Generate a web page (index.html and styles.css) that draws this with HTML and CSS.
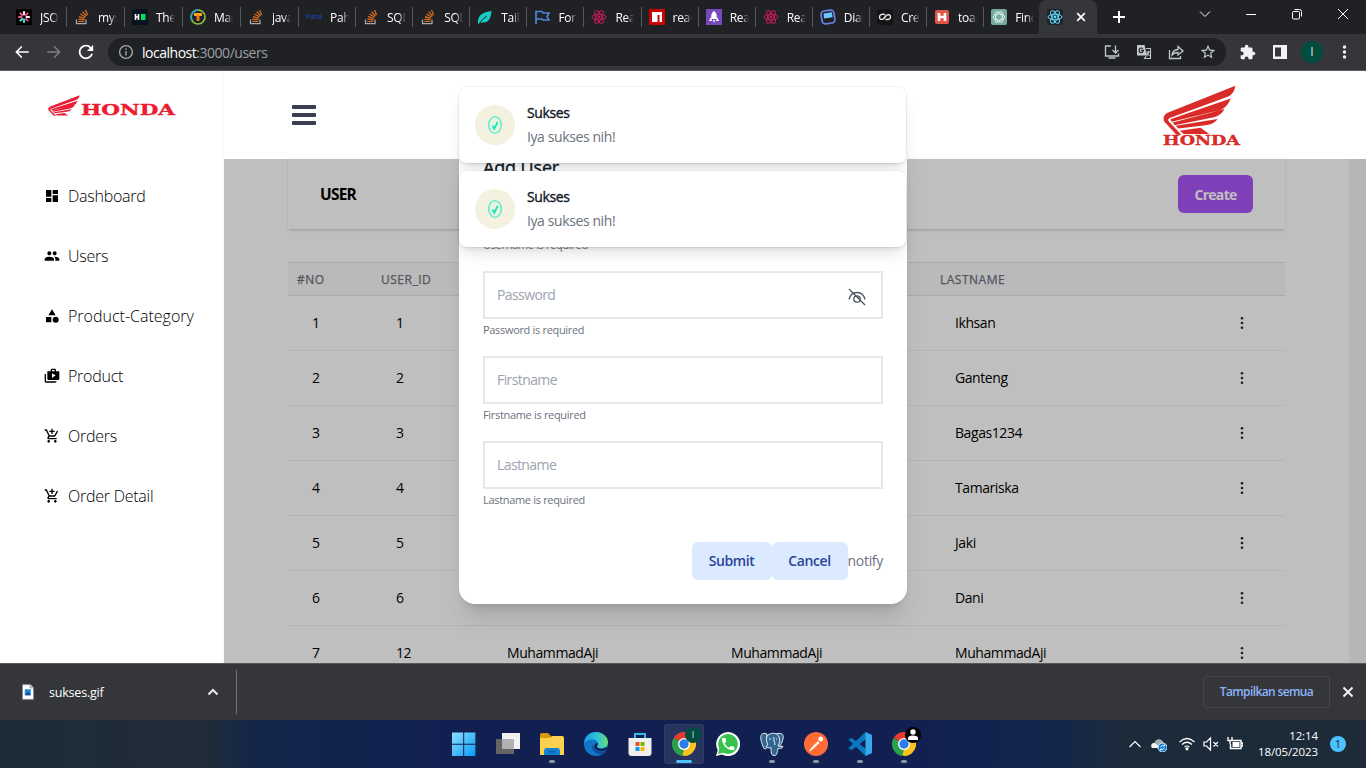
FILE: index.html
```html
<!DOCTYPE html>
<html lang="id">
<head>
<meta charset="utf-8">
<title>Users</title>
<link rel="stylesheet" href="styles.css">
</head>
<body>
<svg class="defs" aria-hidden="true">
  <symbol id="so" viewBox="0 0 16 16"><path d="M2.500 10.500v4.200h9.500v-4.200" fill="none" stroke="#a5a9ad" stroke-width="1.300"/><path d="M4.200 12.500h6M4.400 10.200l6 .6M5 7.600l5.800 1.700M6.400 5l5.200 3M8.600 2.600l4 4.400M11.500 1l2.200 5" stroke="#e2701c" stroke-width="1.200"/></symbol>
  <symbol id="atom" viewBox="0 0 16 16"><g fill="none" stroke="currentColor" stroke-width="1"><ellipse cx="8" cy="8" rx="7" ry="2.800"/><ellipse cx="8" cy="8" rx="7" ry="2.800" transform="rotate(60 8 8)"/><ellipse cx="8" cy="8" rx="7" ry="2.800" transform="rotate(120 8 8)"/></g><circle cx="8" cy="8" r="1.400" fill="currentColor"/></symbol>
  <symbol id="wing" viewBox="788 38 218 152" preserveAspectRatio="none"><path fill="currentColor" d="M1004 40L800 123Q786 132 791 148L828 189H843L806 150Q800 143 808 138L983 73Q1002 62 1004 40ZM990 79L810 142L814 150L960 114Q982 104 990 79ZM972 111L817 152L823 160L940 136Q962 130 972 111ZM951 141L826 162L834 170L915 160Q941 158 951 141ZM838 177L900 168L926 187H850Z"/></symbol>
  <symbol id="cart" viewBox="0 0 24 24"><path d="M11 9h2V6h3V4h-3V1h-2v3H8v2h3v3zm-4 9c-1.100 0-1.990.9-1.990 2S5.900 22 7 22s2-.9 2-2-.9-2-2-2zm10 0c-1.100 0-1.990.9-1.990 2s.89 2 1.990 2 2-.9 2-2-.9-2-2-2zm-9.830-3.250l.03-.12.9-1.630h7.450c.75 0 1.410-.41 1.750-1.030l3.860-7.010L19.420 4h-.01l-1.100 2-2.760 5H8.530l-.13-.27L6.160 6l-.95-2-.94-2H1v2h2l3.600 7.590-1.350 2.450c-.16.28-.25.61-.25.96 0 1.100.9 2 2 2h12v-2H7.420c-.13 0-.25-.11-.25-.25z"/></symbol>
  <symbol id="dots" viewBox="0 0 16 16"><circle cx="8" cy="3.200" r="1.300"/><circle cx="8" cy="8" r="1.300"/><circle cx="8" cy="12.800" r="1.300"/></symbol>
  <symbol id="chrome" viewBox="0 0 24 24"><path fill="#e33b2e" d="M12 12L1.600 6A12 12 0 0 1 22.400 6z"/><path fill="#fcc31e" d="M12 12L22.400 6A12 12 0 0 1 12 24z"/><path fill="#2ca14c" d="M12 12v12A12 12 0 0 1 1.600 6z"/><path fill="#e33b2e" d="M12 6h10.400L17.500 14z"/><path fill="#fcc31e" d="M17.200 9L22.400 6 12 24 8 19z"/><path fill="#2ca14c" d="M1.600 6l5.200 9 5.200 3-2 5.800z"/><circle cx="12" cy="12" r="6" fill="#fff"/><circle cx="12" cy="12" r="4.700" fill="#2b7de9"/></symbol>
  <symbol id="check" viewBox="0 0 40 40"><circle cx="20" cy="20" r="20" fill="#f5f1e0"/><ellipse cx="20" cy="20" rx="6.300" ry="8.300" fill="#e9f3e2" stroke="#4debc8" stroke-width="1.300"/><path d="M17.500 20.500l1.800 3.200 3.300-6.700" fill="none" stroke="#1de5ba" stroke-width="1.800"/></symbol>
</svg>

<div class="tabs">
  <div class="tab"><svg viewBox="0 0 16 16"><path fill="#000" d="M0 0h16v16H0z"/><g stroke-width="2.200" stroke-linecap="round"><path d="M8 3v2.500M13 8h-2.500" stroke="#f2f2f2"/><path d="M11.500 4.500L10 6M11.500 11.500L10 10" stroke="#ec3d75"/><path d="M8 13v-2.500M4.500 11.500L6 10" stroke="#47d6d2"/><path d="M3 8h2.500M4.500 4.500L6 6" stroke="#ee5386"/></g></svg><span>JSON</span></div>
  <div class="tab"><svg><use href="#so"/></svg><span>mysql</span></div>
  <div class="tab"><svg viewBox="0 0 16 16"><path fill="#07131f" d="M0 0h16v16H0z"/><path d="M3.500 5v6M6.500 5v6M3.500 8h3" stroke="#fff" stroke-width="1.600"/><path d="M9 5h4.500v6H9z" fill="#05e05a"/></svg><span>The</span></div>
  <div class="tab"><svg viewBox="0 0 16 16"><circle cx="8" cy="8" r="7" fill="none" stroke="#8fc63d" stroke-width="1.600"/><path d="M8 1a7 7 0 0 0-6 10" fill="none" stroke="#2a9ee0" stroke-width="1.600"/><path d="M4 5.500h8M8 5v7" stroke="#f9a51a" stroke-width="2.800"/><path d="M8 6v6" stroke="#e6432e"/></svg><span>Mar</span></div>
  <div class="tab"><svg><use href="#so"/></svg><span>java</span></div>
  <div class="tab"><svg viewBox="0 0 16 16"><text x="0" y="10" textLength="16" lengthAdjust="spacingAndGlyphs" class="paha">Paha</text></svg><span>Paha</span></div>
  <div class="tab"><svg><use href="#so"/></svg><span>SQL</span></div>
  <div class="tab"><svg><use href="#so"/></svg><span>SQL</span></div>
  <div class="tab"><svg viewBox="0 0 16 16"><path d="M1 15C0 6 6 3 14.500 2 14 9 12 14 5 13.500z" fill="#15cbc4"/><path d="M2 15Q5 10 10 7" stroke="#202124" fill="none"/></svg><span>Tailwind</span></div>
  <div class="tab"><svg viewBox="0 0 16 16"><path d="M2 15V2.500h6l1 1.500h6l-2 3.500 2 3.500H9L8 10H2" fill="none" stroke="#4a87d6" stroke-width="1.700"/></svg><span>Form</span></div>
  <div class="tab pink"><svg><use href="#atom"/></svg><span>React</span></div>
  <div class="tab"><svg viewBox="0 0 16 16"><path d="M0 0h16v16H0z" fill="#cb0303"/><path d="M3 3h10v10h-2.500V6H8.500v7H3z" fill="#fff"/></svg><span>react</span></div>
  <div class="tab"><svg viewBox="0 0 16 16"><path d="M0 0h16v16H0z" fill="#764abc"/><path d="M8 2c3 2 3 5 2.500 8h-5C5 7 5 4 8 2zM5 8l-2 4h3zM11 8l2 4h-3zM7 11h2l-1 3z" fill="#fff"/></svg><span>React</span></div>
  <div class="tab pink"><svg><use href="#atom"/></svg><span>React</span></div>
  <div class="tab"><svg viewBox="0 0 16 16"><rect x="1.500" y="1.500" width="13" height="13" rx="3.500" fill="#202124" stroke="#6983e8" stroke-width="1.700" transform="rotate(-8 8 8)"/><path d="M3.500 4.500l8.500-1.200 .6 5-8.500 1.200z" fill="#6bc7ff"/></svg><span>Dialog</span></div>
  <div class="tab"><svg viewBox="0 0 16 16"><rect width="16" height="16" rx="3.500" fill="#131416"/><path d="M8 5.500Q2.500 4.500 2.500 8t4 1.800L9.500 6.200q4-1.500 4 1.800T8.500 10.300" fill="none" stroke="#e8e8e8" stroke-width="1.400"/></svg><span>Create</span></div>
  <div class="tab"><svg viewBox="0 0 16 16"><rect x="1" y="1" width="14" height="14" rx="2" fill="#e2564a"/><path d="M5 4v8M11 4v8M5 8h6" stroke="#fff" stroke-width="2.600"/></svg><span>toast</span></div>
  <div class="tab"><svg viewBox="0 0 16 16"><rect width="16" height="16" rx="2" fill="#74aa9c"/><g fill="none" stroke="#e8f3f0" stroke-width=".9"><ellipse cx="8" cy="8" rx="5.800" ry="3.200"/><ellipse cx="8" cy="8" rx="5.800" ry="3.200" transform="rotate(60 8 8)"/><ellipse cx="8" cy="8" rx="5.800" ry="3.200" transform="rotate(120 8 8)"/></g></svg><span>Find</span></div>
  <div class="tab active"><svg class="react" viewBox="0 0 16 16"><use href="#atom"/></svg><svg class="x" viewBox="0 0 10 10"><path d="M1.200 1.200l7.600 7.600M8.800 1.200L1.200 8.800" stroke="#fff" stroke-width="1.700"/></svg></div>
  <svg class="plus" viewBox="0 0 14 14"><path d="M7 1v12M1 7h12" stroke="#fff" stroke-width="2"/></svg>
  <div class="winctl">
    <svg viewBox="0 0 12 12"><path d="M1 3.500l5 5 5-5"/></svg><svg viewBox="0 0 12 12"><path d="M1 6.500h10"/></svg><svg viewBox="0 0 12 12"><rect x="1.500" y="3.500" width="7" height="7.500" rx="1"/><path d="M3.500 1.500h5q2 0 2 2v5"/></svg><svg viewBox="0 0 12 12"><path d="M1 1l10 10M11 1L1 11"/></svg>
  </div>
</div>

<div class="toolbar">
  <div class="nav">
    <svg viewBox="0 0 24 24" fill="#fff"><path d="M21 11H6.800l5.700-5.600L11 4l-8 8 8 8 1.500-1.400L6.800 13H21z"/></svg>
    <svg viewBox="0 0 24 24" fill="#7d7f82"><path d="M3 11h14.200l-5.700-5.600L13 4l8 8-8 8-1.500-1.400 5.700-5.600H3z"/></svg>
    <svg viewBox="2 2 20 20" fill="#fff"><path d="M17.650 6.350C16.200 4.900 14.210 4 12 4c-4.420 0-7.990 3.580-7.990 8s3.570 8 7.990 8c3.730 0 6.840-2.550 7.730-6h-2.080c-.82 2.330-3.040 4-5.650 4-3.310 0-6-2.690-6-6s2.690-6 6-6c1.660 0 3.140.69 4.220 1.780L13 11h7V4l-2.350 2.350z"/></svg>
  </div>
  <div class="address">
    <svg viewBox="0 0 16 16" fill="none" stroke="#a3a6aa" stroke-width="1.400"><circle cx="8" cy="8" r="6.400"/><path d="M8 7v4.500M8 4.200v1.600"/></svg>
    <span class="url">localhost<i>:3000/users</i></span>
    <div class="aicons">
      <svg viewBox="0 0 16 16"><path d="M7 2H1.500v10h13V9.500M4.500 14h7M11.500 1.500v7M8.500 6l3 3 3-3"/></svg>
      <svg viewBox="0 0 16 16"><path class="solid" fill-rule="evenodd" d="M1 1h7.500l2.500 10.500H1zM8 5.800H5v1.100h1.700Q6.300 8 5.200 8 3.600 8 3.600 6.300T5.200 4.600q.7 0 1.200.5l.9-.9Q6.400 3.400 5.200 3.400 2.500 3.400 2.500 6.300T5.200 9.200 8 5.800z"/><path d="M10 4.500h4.500v10h-6l2-3M10.500 8H14M12.500 7v1q-.5 2-1.500 3M11 9l2.500 3" stroke-width="1.100"/></svg>
      <svg viewBox="0 0 16 16"><path d="M1.500 6v8.500h11V12M4 11q.5-5 6-5.500V2.500L15 7l-5 4V8.500Q6 8.500 4 11z"/></svg>
      <svg viewBox="1 1 22 22"><path class="solid" d="M22 9.240l-7.190-.62L12 2 9.190 8.630 2 9.240l5.460 4.730L5.820 21 12 17.270 18.180 21l-1.630-7.030L22 9.240zM12 15.400l-3.760 2.270 1-4.280-3.320-2.880 4.380-.38L12 6.100l1.710 4.040 4.380.38-3.320 2.880 1 4.280L12 15.400z"/></svg>
    </div>
  </div>
  <div class="ext">
    <svg viewBox="1 0 23 23" fill="#f1f3f4"><path d="M20.500 11H19V7c0-1.100-.9-2-2-2h-4V3.500C13 2.120 11.880 1 10.500 1S8 2.120 8 3.500V5H4c-1.100 0-1.990.9-1.990 2v3.800H3.500c1.490 0 2.700 1.210 2.700 2.700s-1.210 2.700-2.700 2.700H2V20c0 1.100.9 2 2 2h3.800v-1.500c0-1.490 1.210-2.700 2.700-2.700 1.490 0 2.700 1.210 2.700 2.700V22H17c1.100 0 2-.9 2-2v-4h1.500c1.380 0 2.500-1.120 2.500-2.500S21.880 11 20.500 11z"/></svg>
    <svg viewBox="0 0 16 16"><path d="M1 1h14v14H1zM3 3.500v9h6v-9z" fill="#f1f3f4" fill-rule="evenodd"/></svg>
    <b class="me">I</b>
    <svg viewBox="0 0 16 16" fill="#f1f3f4"><circle cx="8.500" cy="3" r="1.700"/><circle cx="8.500" cy="8" r="1.700"/><circle cx="8.500" cy="13" r="1.700"/></svg>
  </div>
</div>

<div class="page">
  <aside class="side">
    <div class="brand"><svg class="wing"><use href="#wing"/></svg><svg class="name" viewBox="0 0 95 12"><text x="0" y="11" textLength="94" lengthAdjust="spacingAndGlyphs">HONDA</text></svg></div>
    <nav class="menu">
      <a><svg viewBox="0 0 24 24"><path d="M3 13h8V3H3v10zm0 8h8v-6H3v6zm10 0h8V11h-8v10zm0-18v6h8V3h-8z"/></svg>Dashboard</a>
      <a><svg viewBox="0 0 24 24"><path d="M16 11c1.660 0 2.990-1.340 2.990-3S17.660 5 16 5c-1.660 0-3 1.340-3 3s1.340 3 3 3zm-8 0c1.660 0 2.990-1.340 2.990-3S9.660 5 8 5C6.340 5 5 6.340 5 8s1.340 3 3 3zm0 2c-2.330 0-7 1.170-7 3.500V19h14v-2.500c0-2.330-4.670-3.500-7-3.500zm8 0c-.29 0-.62.02-.97.05 1.160.84 1.970 1.970 1.970 3.450V19h6v-2.500c0-2.330-4.670-3.500-7-3.500z"/></svg>Users</a>
      <a class="wide"><svg viewBox="0 0 24 24"><path d="M12 2l-5.500 9h11zM3 13.500h8v8H3z"/><circle cx="17.500" cy="17.500" r="4.500"/></svg>Product-Category</a>
      <a><svg viewBox="0 0 24 24"><path d="M3 9H1v11c0 1.110.89 2 2 2h14c1.110 0 2-.89 2-2H3V9zm15-4V3c0-1.110-.89-2-2-2h-4c-1.110 0-2 .89-2 2v2H5v11c0 1.110.89 2 2 2h14c1.110 0 2-.89 2-2V5h-5zm-6-2h4v2h-4V3zm0 12V8l5.500 3-5.500 4z"/></svg>Product</a>
      <a><svg><use href="#cart"/></svg>Orders</a>
      <a><svg><use href="#cart"/></svg>Order Detail</a>
    </nav>
  </aside>
  <main class="main">
    <header class="top">
      <div class="burger"><i></i><i></i><i></i></div>
      <div class="logo"><svg class="wing"><use href="#wing"/></svg><svg class="name" viewBox="0 0 77 10"><text x="0" y="9" textLength="77" lengthAdjust="spacingAndGlyphs">HONDA</text></svg></div>
    </header>
    <section class="content">
      <div class="card"><h1>USER</h1><button class="create">Create</button></div>
      <div class="table">
        <div class="row head"><span>#NO</span><span>USER_ID</span><span></span><span></span><span>LASTNAME</span></div>
        <div class="row"><span>1</span><span>1</span><span></span><span></span><span>Ikhsan</span><svg><use href="#dots"/></svg></div>
        <div class="row"><span>2</span><span>2</span><span></span><span></span><span>Ganteng</span><svg><use href="#dots"/></svg></div>
        <div class="row"><span>3</span><span>3</span><span></span><span></span><span>Bagas1234</span><svg><use href="#dots"/></svg></div>
        <div class="row"><span>4</span><span>4</span><span></span><span></span><span>Tamariska</span><svg><use href="#dots"/></svg></div>
        <div class="row"><span>5</span><span>5</span><span></span><span></span><span>Jaki</span><svg><use href="#dots"/></svg></div>
        <div class="row"><span>6</span><span>6</span><span></span><span></span><span>Dani</span><svg><use href="#dots"/></svg></div>
        <div class="row"><span>7</span><span>12</span><span>MuhammadAji</span><span>MuhammadAji</span><span>MuhammadAji</span><svg><use href="#dots"/></svg></div>
      </div>
      <div class="shade"></div>
    </section>
  </main>

  <div class="modal">
    <h2>Add User</h2>
    <div class="field"><div class="input"></div><p>Username is required</p></div>
    <div class="field"><div class="input"><span>Password</span><svg viewBox="0 0 20 20" fill="none" stroke="#4b5563" stroke-width="1.300"><path d="M2 12.500C3 8 6 5.500 10 5.500s7 2.500 8 7M2 2l16 16"/><circle cx="10" cy="12" r="3.200"/></svg></div><p>Password is required</p></div>
    <div class="field"><div class="input"><span>Firstname</span></div><p>Firstname is required</p></div>
    <div class="field"><div class="input"><span>Lastname</span></div><p>Lastname is required</p></div>
    <div class="actions"><button class="submit">Submit</button><button class="cancel">Cancel</button><span>notify</span></div>
  </div>
  <div class="toasts">
    <div class="toast"><svg><use href="#check"/></svg><div><b>Sukses</b><p>Iya sukses nih!</p></div></div>
    <div class="toast"><svg><use href="#check"/></svg><div><b>Sukses</b><p>Iya sukses nih!</p></div></div>
  </div>
</div>

<div class="downloads">
  <div class="file">
    <svg class="doc" viewBox="0 0 13 17"><path d="M.5.500h8.500l3.500 3.500v12.500H.5z" fill="#fff" stroke="#85878a"/><path d="M9 .5v3.500h3.500" fill="#ddd" stroke="#85878a"/><path d="M3 5.500h6.500v6.500H3z" fill="#2387dc"/><path d="M3 12l4-4 2.500 4z" fill="#0b4f9c"/></svg>
    <span>sukses.gif</span>
    <svg class="up" viewBox="0 0 12 8"><path d="M1.500 6.500L6 2l4.500 4.500" fill="none" stroke="#e8eaed" stroke-width="2"/></svg>
  </div>
  <button class="all">Tampilkan semua</button>
  <svg class="close" viewBox="0 0 12 12"><path d="M1.500 1.500l9 9M10.500 1.500l-9 9" stroke="#f1f3f4" stroke-width="1.900"/></svg>
</div>

<div class="taskbar">
  <div class="apps">
    <div class="app"><svg viewBox="0 0 24 24"><defs><linearGradient id="w" x2="1" y2="1"><stop stop-color="#8be2ff"/><stop offset="1" stop-color="#0a99f4"/></linearGradient></defs><path fill="url(#w)" d="M0 .5h11.200v11.200H0zM12.200.5h11.200v11.200H12.200zM0 12.700h11.200V23.900H0zM12.200 12.700h11.200V23.900H12.200z"/></svg></div>
    <div class="app"><svg viewBox="0 0 24 24"><path fill="#646464" d="M0 7h18v15H0z"/><path fill="#f1f1f1" d="M6 1h18v16H6z"/><path fill="#b0b1b5" d="M6 7h12v10H6z"/></svg></div>
    <div class="app run"><svg viewBox="0 0 24 24"><path fill="#d99a06" d="M0 3q0-2 2-2h6l3 3v4H0z"/><path fill="#ffd04f" d="M0 6h10l2-2h10q2 0 2 2v17H0z"/><path fill="#1282d3" d="M4 23v-4q0-3 3-3h10q3 0 3 3v4z"/><path fill="#0b5ca8" d="M8 19h8v1.500H8z"/></svg></div>
    <div class="app"><svg viewBox="0 0 24 24"><defs><linearGradient id="e" x2="1"><stop stop-color="#169be1"/><stop offset=".6" stop-color="#35c5d5"/><stop offset="1" stop-color="#69dc62"/></linearGradient></defs><circle cx="12" cy="12" r="12" fill="#1275c9"/><path fill="url(#e)" d="M0 12C0 4 6 0 12 0s12 4.500 12 10c0 4-3 6.500-7 6.500-3 0-4-1-4-2 0-.8 1.200-1.200 1-3C13.700 8.500 10.500 7 7 7.500 3.500 8 1 10 0 12z"/><path fill="#0c4e9d" d="M8 12c-1 6 3 10.500 10 10.300 2-.5 4-2.300 4.500-4-6 3-13 1-14.500-6.300z"/><path fill="#12235a" d="M14 11c.2 2-1 2.500-1 3.600 0 2 5 3.500 9.500.5l1 2.500c-6 3.500-13 1-13.500-3 0-2 2-4 4-3.600z"/></svg></div>
    <div class="app"><svg viewBox="0 0 24 24"><path d="M7 6V2h10v4" fill="none" stroke="#32b8ed" stroke-width="2"/><path fill="#f0f0f0" d="M.5 6h23v15q0 3-3 3h-17q-3 0-3-3z"/><path fill="#ee5026" d="M7.500 10h4v4h-4z"/><path fill="#7db800" d="M12.500 10h4v4h-4z"/><path fill="#00a1ec" d="M7.500 15h4v4h-4z"/><path fill="#fbb600" d="M12.500 15h4v4h-4z"/></svg></div>
    <div class="app current"><svg><use href="#chrome"/></svg><em>I</em></div>
    <div class="app"><svg viewBox="0 0 24 24"><path fill="#fff" d="M0 24l1.700-6A12 12 0 1 1 6 22.400z"/><circle cx="12" cy="12" r="9.900" fill="#36c24c"/><path fill="#36c24c" d="M2 22l1.500-6 4.500 4.500z"/><path fill="#fff" transform="translate(4 4) scale(.68)" d="M6.620 10.790c1.440 2.830 3.760 5.140 6.590 6.590l2.200-2.200c.27-.27.67-.36 1.020-.24 1.120.37 2.330.57 3.570.57.55 0 1 .45 1 1V20c0 .55-.45 1-1 1-9.390 0-17-7.610-17-17 0-.55.45-1 1-1h3.500c.55 0 1 .45 1 1 0 1.250.2 2.450.57 3.570.11.35.03.74-.25 1.020l-2.200 2.200z"/></svg></div>
    <div class="app run"><svg viewBox="0 0 24 24" fill="#336791" stroke="#e7eff5" stroke-width="1"><path d="M7 2C2 0 0 3 1 8c1 4 2.500 9 4 9s2-2 3-3c0-5-2-8-1-12z"/><path d="M16 2c6-2 8 1 7 5s-3 8-5 8z"/><path d="M8 3c4-3 10-2 11 2 1 3 1 6-1 9l5 .5c-1 2-3 2-5 2-1 5-1 7-4 7-3 0-3-4-3-8-2 1-5 0-5-1 2-1 2-2 1-4-1-3-.5-6 1-7.500z"/><path d="M14 5c-1 3 1 5 1 8M9 7h2M17 7h-1" fill="none"/></svg></div>
    <div class="app run"><svg viewBox="0 0 24 24"><circle cx="12" cy="12" r="12" fill="#ff6c37"/><circle cx="16.800" cy="7" r="2.400" fill="#fff"/><path d="M14.500 9L8 15.500l-2.500 3.500L9 16.500 15 11" fill="#fff" stroke="#fff" stroke-width=".8"/></svg></div>
    <div class="app run"><svg viewBox="0 0 24 24"><path fill="#0c77be" d="M17.500 0L24 3v18l-6.500 3L2.500 9.500l-2-1.500 2-2 2 .5L18 17V7L4.500 17.500l-2 .5-2-2z"/><path fill="#37a9eb" d="M17.500 0L24 3v18l-6.500 3z"/></svg></div>
    <div class="app run"><svg><use href="#chrome"/></svg><em class="guest"><svg viewBox="0 0 16 16" fill="#fff"><circle cx="8" cy="5" r="2.700"/><path d="M3 13V11q0-2.500 5-2.500t5 2.500v2z"/></svg></em></div>
  </div>
  <div class="tray">
    <svg viewBox="0 0 16 16"><path d="M2.500 11L8 5.500l5.500 5.500"/></svg>
    <svg class="cloud" viewBox="0 0 16 16"><path d="M1 12c-2-4 1-5 2.500-5 1-5 8-5 9 0 4 0 4 5 1 5z" fill="#a8abae" stroke="none"/><path d="M1 12c-2-4 1-5 2.500-5l7 5z" fill="#f4f4f4" stroke="none"/><circle cx="11.500" cy="11.500" r="4.500" fill="#137ed4" stroke="#fff" stroke-width=".8"/><path d="M9.500 11q2-2.500 4-1V8.500M13.500 12q-2 2.500-4 1v1.500" stroke-width="1"/></svg>
    <svg viewBox="0 0 16 16"><path d="M.5 6Q8-1 15.500 6M3 8.500q5-4.500 10 0M5.500 11Q8 9 10.500 11"/><circle cx="8" cy="12.800" r="1" fill="#fff"/></svg>
    <svg viewBox="0 0 16 16"><path d="M1 6h2.500l4-4v12l-4-4H1zM10.500 6l4.500 4.500M15 6l-4.500 4.500"/></svg>
    <svg viewBox="0 0 16 16"><path d="M5 4.500h9v8H3.500V8M14.500 7H16v3h-1.500M1 1v3.500h4V1M3 5v3" stroke-width="1.400"/><path d="M5.500 6h7v5h-7z" fill="#fff" stroke="none"/></svg>
    <div class="clock"><span>12:14</span><span>18/05/2023</span></div>
    <b class="count">1</b>
  </div>
</div>
</body>
</html>
```
FILE: styles.css
```css
* { box-sizing: border-box; }
body { margin: 0; width: 1366px; height: 768px; overflow: hidden; display: flex; flex-direction: column; font-family: "Open Sans", "Noto Sans", sans-serif; }
h1, h2, p { margin: 0; }
button { border: 0; padding: 0; font-family: inherit; }
svg { flex: none; display: block; }
.defs { position: absolute; width: 0; height: 0; }

.tabs { height: 34px; flex: none; background: #202124; display: flex; align-items: center; padding-left: 9px; }
.tab { width: 57.100px; height: 20px; flex: none; display: flex; align-items: center; padding-left: 7px; gap: 8px; border-right: 1px solid #55575a; color: #fff; font-size: 12px; }
.tab:nth-child(-n+5) { width: 58px; }
.tab svg { width: 16px; height: 16px; }
.tab span { width: 19px; overflow: hidden; white-space: nowrap; letter-spacing: -.3px; -webkit-mask-image: linear-gradient(90deg, #000 60%, transparent); mask-image: linear-gradient(90deg, #000 60%, transparent); }
.tab:nth-child(18) { border-color: transparent; width: 55px; }
.paha { font-size: 7px; fill: #164fc2; }
.pink svg { color: #c91d57; }
.tab.active { height: 34px; width: 58px; background: #35363a; border: 0; border-radius: 8px 8px 0 0; gap: 13px; padding-left: 8px; }
.tab.active .react { color: #61dafb; background: #20232a; border-radius: 2px; }
.tab.active .x { width: 10px; height: 10px; }
.plus { width: 14px; height: 14px; margin-left: 15px; }
.winctl { display: flex; gap: 34px; margin-left: auto; padding: 0 17px 6px 0; }
.winctl svg { width: 12px; height: 12px; fill: none; stroke: #fff; stroke-width: 1; }

.toolbar { height: 37px; flex: none; background: #35363a; border-bottom: 1px solid #5c5960; display: flex; align-items: center; padding: 0 13px; }
.nav { display: flex; gap: 14px; }
.nav svg { width: 18px; height: 18px; }
.address { width: 1118px; height: 28px; margin-left: 13px; border-radius: 14px; background: #202124; display: flex; align-items: center; padding: 0 10px; }
.address > svg { width: 16px; height: 16px; }
.url { margin-left: 8px; font-size: 14px; color: #fff; letter-spacing: -.48px; }
.url i { font-style: normal; color: #9aa0a6; }
.aicons { display: flex; gap: 16px; margin-left: auto; }
.aicons svg { width: 16px; height: 16px; fill: none; stroke: #c4c7c9; stroke-width: 1.300; }
.aicons .solid { fill: #c4c7c9; stroke: none; }
.ext { display: flex; align-items: center; margin-left: 14px; gap: 16px; }
.ext svg { width: 16px; height: 16px; }
.me { width: 22px; height: 22px; border-radius: 50%; background: #004d40; color: #d4e3e1; font: 12px/22px "Open Sans", sans-serif; text-align: center; margin: 0 -3px; }

.page { height: 592px; flex: none; display: flex; position: relative; overflow: hidden; background: #fff; }
.side { width: 224px; box-shadow: inset -1px 0 #fafafa; }
.brand { display: flex; align-items: flex-end; gap: 1px; padding: 24px 0 0 48px; color: #ec1b34; fill: #ec1b34; }
.brand .wing { width: 32px; height: 21px; }
.brand .name { width: 95px; height: 12px; overflow: visible; }
.name text { font-family: "DejaVu Serif", serif; font-weight: bold; stroke: currentColor; stroke-width: .35px; }
.brand text { font-size: 14.500px; }
.menu { padding-top: 50px; display: flex; flex-direction: column; }
.menu a { height: 60px; display: flex; align-items: center; padding-left: 44px; gap: 8px; font-size: 16px; font-weight: 300; letter-spacing: -.25px; color: #000; }
.menu .wide { letter-spacing: 0; }
.menu svg { width: 16px; height: 16px; }
.main { flex: 1; display: flex; flex-direction: column; }
.top { height: 88px; flex: none; display: flex; justify-content: space-between; align-items: flex-start; padding: 14px 125px 0 68px; }
.burger { display: flex; flex-direction: column; gap: 4px; padding-top: 20px; }
.burger i { width: 24px; height: 4px; border-radius: 1px; background: #374151; }
.logo { color: #d92b27; fill: #d92b27; width: 78px; }
.logo .wing { width: 73px; height: 50px; }
.logo .name { width: 77px; height: 10px; margin-top: 1px; overflow: visible; }
.logo text { font-size: 12.500px; }
.content { flex: 1; position: relative; border-right: 17px solid #f1f3f5; padding: 0 64px; }
.card { height: 70px; display: flex; align-items: center; justify-content: space-between; padding: 0 32px; box-shadow: 0 2px 3px -1px rgba(0,0,0,.2), 0 0 1px rgba(0,0,0,.1); }
.card h1 { font-size: 15.500px; font-weight: 700; letter-spacing: -.8px; color: #000; }
.create { width: 75px; height: 38px; border-radius: 6px; background: #a855f7; color: #fff; font-size: 14px; font-weight: 700; letter-spacing: -.7px; }
.table { margin-top: 33px; }
.row { height: 55px; display: grid; grid-template-columns: 84px 111px 224px 224px 303px 16px; align-items: center; border-bottom: 1px solid #efefef; font-size: 14px; letter-spacing: -.42px; color: #000; }
.row span { padding: 0 0 2px 24px; }
.row svg { width: 16px; height: 16px; fill: #1f2937; }
.row.head { height: 34px; background: #f8f8f8; border: solid #e5e5e5; border-width: 1px 0; font-size: 12px; letter-spacing: .5px; color: #6b7280; -webkit-text-stroke: .25px; }
.row.head span { padding: 0 0 0 9px; }
.shade { position: absolute; inset: 0 -17px 0 0; background: rgba(0,0,0,.25); }

.modal { position: absolute; left: 459px; top: 60px; width: 448px; height: 473px; background: #fff; border-radius: 16px; padding: 24px; box-shadow: 0 20px 25px -5px rgba(0,0,0,.1), 0 8px 10px -6px rgba(0,0,0,.15); }
.modal h2 { height: 31px; font-size: 18px; line-height: 24px; font-weight: 400; letter-spacing: -.15px; color: #111827; -webkit-text-stroke: .35px; }
.field { height: 85px; }
.input { height: 48px; border: 2px solid #e5e7eb; display: flex; align-items: center; justify-content: space-between; padding: 0 14px 0 12px; font-size: 14px; letter-spacing: -.7px; color: #9ca3af; }
.input span { padding-bottom: 2px; letter-spacing: -.6px; }
.input svg { width: 20px; height: 20px; margin-top: 3px; }
.field p { margin-top: 1px; font-size: 11px; line-height: 20px; letter-spacing: -.32px; color: #6b7280; }
.actions { margin-top: 16px; display: flex; justify-content: flex-end; align-items: center; color: #6b7280; font-size: 14px; letter-spacing: -.3px; }
.actions button { height: 38px; border-radius: 6px; background: #dbeafe; color: #2b4595; font-size: 14px; font-weight: 600; letter-spacing: -.4px; padding-bottom: 1px; }
.actions span { padding-bottom: 1px; }
.actions .submit { width: 80px; }
.actions .cancel { width: 76px; }
.toasts { position: absolute; left: 459px; top: 16px; width: 447px; display: flex; flex-direction: column; gap: 8px; }
.toast { height: 76px; background: #fff; border-radius: 8px; display: flex; align-items: center; gap: 12px; padding: 0 16px; box-shadow: 0 0 0 1px rgba(0,0,0,.05), 0 10px 15px -3px rgba(0,0,0,.1), 0 4px 6px -4px rgba(0,0,0,.15); font-size: 14px; line-height: 20px; letter-spacing: -.4px; }
.toast svg { width: 40px; height: 40px; }
.toast b { font-weight: 400; color: #111827; display: block; -webkit-text-stroke: .35px; }
.toast p { margin-top: 4px; color: #6b7280; }

.downloads { height: 57px; flex: none; background: #35363a; border-top: 1px solid #56585b; display: flex; align-items: center; }
.file { width: 237px; height: 44px; display: flex; align-items: center; border-right: 1px solid #707276; padding: 0 17px 0 22px; color: #fff; font-size: 12.500px; letter-spacing: -.2px; }
.file .doc { width: 12px; height: 16px; }
.file span { margin-left: 15px; }
.file .up { width: 12px; height: 8px; margin-left: auto; }
.all { width: 127px; height: 32px; margin-left: auto; border: 1px solid #44464a; border-radius: 4px; background: none; color: #8ab4f8; font-size: 12px; font-weight: 600; letter-spacing: -.62px; padding-bottom: 2px; }
.close { width: 12px; height: 12px; margin: 0 12px; }

.taskbar { height: 48px; flex: none; display: flex; align-items: center; background: linear-gradient(90deg, #1d2c39, #202c37 200px, #12264a 260px, #112050 440px, #112050 930px, #13264b 1060px, #1c2b3a 1120px, #1d2b38); }
.apps { display: flex; gap: 4px; margin-left: 444px; }
.app { width: 40px; height: 40px; border-radius: 4px; display: flex; align-items: center; justify-content: center; position: relative; }
.app > svg { width: 24px; height: 24px; }
.run::after, .current::after { content: ""; position: absolute; bottom: 1px; left: 17px; width: 6px; height: 3px; border-radius: 2px; background: #8e95a5; }
.current { background: #26345e; box-shadow: inset 0 0 0 1px #303d66; }
.current::after { left: 12px; width: 16px; background: #4cc2ff; }
.app em { position: absolute; left: 21px; top: 3px; width: 16px; height: 16px; border-radius: 50%; background: #004d40; color: #d4e3e1; font: 9px/16px "Open Sans", sans-serif; text-align: center; }
.app .guest { background: #000; }
.tray { margin-left: auto; display: flex; align-items: center; gap: 8px; padding-right: 20px; }
.tray svg { width: 16px; height: 16px; fill: none; stroke: #fff; stroke-width: 1.200; }
.tray .cloud { margin-right: 4px; }
.clock { width: 67px; display: flex; flex-direction: column; align-items: flex-end; color: #fff; font-size: 11.500px; line-height: 16px; letter-spacing: -.1px; }
.count { width: 16px; height: 16px; border-radius: 50%; background: #4cc2ff; color: #10283a; font: 11px/16px "Open Sans", sans-serif; text-align: center; margin-left: 4px; }
```
